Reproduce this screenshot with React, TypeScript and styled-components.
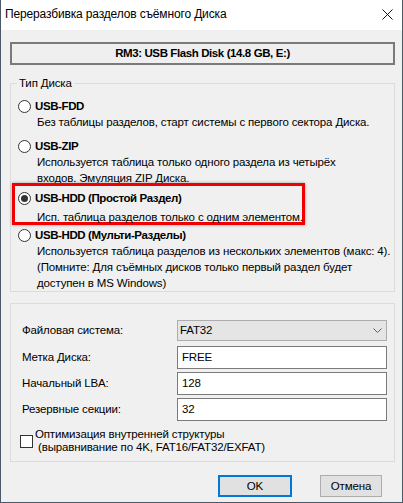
import React from "react";
import styled, { createGlobalStyle } from "styled-components";

const GlobalStyle = createGlobalStyle`
  html, body {
    margin: 0;
    padding: 0;
    background: #3d4a57;
  }
  * {
    box-sizing: border-box;
  }
`;

type RadioItem = {
  label: string;
  lines: string[];
  checked?: boolean;
};

const items: RadioItem[] = [
  {
    label: "USB-FDD",
    lines: ["Без таблицы разделов, старт системы с первого сектора Диска."],
  },
  {
    label: "USB-ZIP",
    lines: [
      "Используется таблица только одного раздела из четырёх",
      "входов. Эмуляция ZIP Диска.",
    ],
  },
  {
    label: "USB-HDD (Простой Раздел)",
    lines: ["Исп. таблица разделов только с одним элементом."],
    checked: true,
  },
  {
    label: "USB-HDD (Мульти-Разделы)",
    lines: [
      "Используется таблица разделов из нескольких элементов (макс: 4).",
      "(Помните: Для съёмных дисков только первый раздел будет",
      "доступен в MS Windows)",
    ],
  },
];

function Option({ item }: { item: RadioItem }) {
  return (
    <>
      <RadioRow>
        <RadioCircle $checked={item.checked} />
        <RadioLabel>{item.label}</RadioLabel>
      </RadioRow>
      <Desc>
        {item.lines.map((l) => (
          <div key={l}>{l}</div>
        ))}
      </Desc>
    </>
  );
}

function App() {
  return (
    <Window>
      <GlobalStyle />
      <TitleBar>
        <Title>Переразбивка разделов съёмного Диска</Title>
        <CloseIcon width="11" height="11" viewBox="0 0 11 11">
          <path d="M0.5 0.5 L10.5 10.5 M10.5 0.5 L0.5 10.5" stroke="#111" strokeWidth="1" />
        </CloseIcon>
      </TitleBar>
      <Content>
        <DiskButton>RM3: USB Flash Disk (14.8 GB, E:)</DiskButton>

        <Group $top={18}>
          <Legend>Тип Диска</Legend>
          <Option item={items[0]} />
          <Spacer $h={9} />
          <Option item={items[1]} />
          <Highlight>
            <Option item={items[2]} />
          </Highlight>
          <Spacer $h={3} />
          <Option item={items[3]} />
        </Group>

        <Group $top={11} $pad="15px 8px 7px 11px">
          <FieldRow>
            <FieldLabel>Файловая система:</FieldLabel>
            <Combo>
              <span>FAT32</span>
              <svg width="9" height="5" viewBox="0 0 9 5">
                <path d="M0.5 0.5 L4.5 4.5 L8.5 0.5" fill="none" stroke="#606060" strokeWidth="1" />
              </svg>
            </Combo>
          </FieldRow>
          <FieldRow>
            <FieldLabel>Метка Диска:</FieldLabel>
            <TextBox>FREE</TextBox>
          </FieldRow>
          <FieldRow>
            <FieldLabel>Начальный LBA:</FieldLabel>
            <TextBox>128</TextBox>
          </FieldRow>
          <FieldRow>
            <FieldLabel>Резервные секции:</FieldLabel>
            <TextBox>32</TextBox>
          </FieldRow>
          <CheckRow>
            <CheckBox />
            <CheckText>
              <div>Оптимизация внутренней структуры</div>
              <div>&nbsp;(выравнивание по 4K, FAT16/FAT32/EXFAT)</div>
            </CheckText>
          </CheckRow>
        </Group>

        <ButtonRow>
          <DialogButton $primary>OK</DialogButton>
          <DialogButton>Отмена</DialogButton>
        </ButtonRow>
      </Content>
    </Window>
  );
}

export default App;

// styles

const font = `"Liberation Sans", Arial, sans-serif`;

const Window = styled.div`
  width: 403px;
  height: 503px;
  background: #f0f0f0;
  border: 1px solid #4b5866;
  border-top: none;
  display: flex;
  flex-direction: column;
  font-family: ${font};
  font-size: 11.5px;
  letter-spacing: -0.15px;
  line-height: 15px;
  color: #000;
  white-space: nowrap;
  overflow: hidden;
`;

const TitleBar = styled.div`
  height: 30px;
  flex-shrink: 0;
  background: #fff;
  display: flex;
  align-items: center;
  justify-content: space-between;
  padding: 0 9px 2px 4px;
`;

const Title = styled.div`
  font-size: 12px;
  color: #000;
`;

const CloseIcon = styled.svg`
  display: block;
`;

const Content = styled.div`
  flex: 1;
  display: flex;
  flex-direction: column;
  padding: 12px 7px 0 9px;
`;

const DiskButton = styled.div`
  height: 23px;
  flex-shrink: 0;
  border: 2px solid #7a7a7a;
  background: #efefef;
  display: flex;
  align-items: center;
  justify-content: center;
  font-weight: bold;
  letter-spacing: -0.4px;
`;

const Group = styled.div<{ $top: number; $pad?: string }>`
  margin-top: ${(p) => p.$top}px;
  flex-shrink: 0;
  border: 1px solid #dcdcdc;
  padding: ${(p) => p.$pad || "0 0 0 7px"};
  display: flex;
  flex-direction: column;
`;

const Legend = styled.div`
  margin: -9px 0 8px -1px;
  padding: 0 2px;
  width: fit-content;
  line-height: 16px;
  background: #f0f0f0;
`;

const Spacer = styled.div<{ $h: number }>`
  height: ${(p) => p.$h}px;
  flex-shrink: 0;
`;

const RadioRow = styled.div`
  display: flex;
  align-items: center;
  height: 15px;
`;

const RadioCircle = styled.span<{ $checked?: boolean }>`
  width: 13px;
  height: 13px;
  border-radius: 50%;
  border: 1px solid #333;
  background: #fff;
  display: flex;
  align-items: center;
  justify-content: center;
  flex-shrink: 0;
  &::after {
    content: "";
    width: 7px;
    height: 7px;
    border-radius: 50%;
    background: ${(p) => (p.$checked ? "#333" : "transparent")};
  }
`;

const RadioLabel = styled.span`
  margin-left: 4px;
  font-weight: bold;
  letter-spacing: -0.4px;
`;

const Desc = styled.div`
  padding-left: 19px;
  line-height: 16px;
`;

const Highlight = styled.div`
  margin: -3px 0 0 -6px;
  width: 293px;
  height: 42px;
  flex-shrink: 0;
  border: 3px solid #f00000;
  padding: 5px 0 0 3px;
  box-shadow: 0 0 3px rgba(0, 0, 0, 0.35);
  display: flex;
  flex-direction: column;
  & > div:nth-child(2) {
    margin-top: 3px;
  }
`;

const FieldRow = styled.div`
  display: grid;
  grid-template-columns: 155px 210px;
  align-items: center;
  height: 22px;
  margin-bottom: 4px;
  &:first-child {
    margin-bottom: 5px;
  }
`;

const FieldLabel = styled.span``;

const Combo = styled.div`
  height: 21px;
  border: 1px solid #adadad;
  background: #e5e5e5;
  display: flex;
  align-items: center;
  justify-content: space-between;
  padding: 0 4px 0 2px;
`;

const TextBox = styled.div`
  height: 23px;
  border: 1px solid #7a7a7a;
  background: #fff;
  display: flex;
  align-items: center;
  padding-left: 4px;
`;

const CheckRow = styled.div`
  display: flex;
  align-items: center;
  margin: 4px 0 0 -2px;
`;

const CheckBox = styled.span`
  width: 13px;
  height: 13px;
  border: 1px solid #333;
  background: #fff;
  flex-shrink: 0;
`;

const CheckText = styled.div`
  margin-left: 2px;
  line-height: 13px;
`;

const ButtonRow = styled.div`
  display: flex;
  justify-content: flex-end;
  gap: 28px;
  margin-top: 13px;
  padding-right: 13px;
`;

const DialogButton = styled.div<{ $primary?: boolean }>`
  width: ${(p) => (p.$primary ? "74px" : "62px")};
  height: 22px;
  border: ${(p) => (p.$primary ? "2px solid #0078d7" : "1px solid #adadad")};
  background: #e1e1e1;
  display: flex;
  align-items: center;
  justify-content: center;
`;
